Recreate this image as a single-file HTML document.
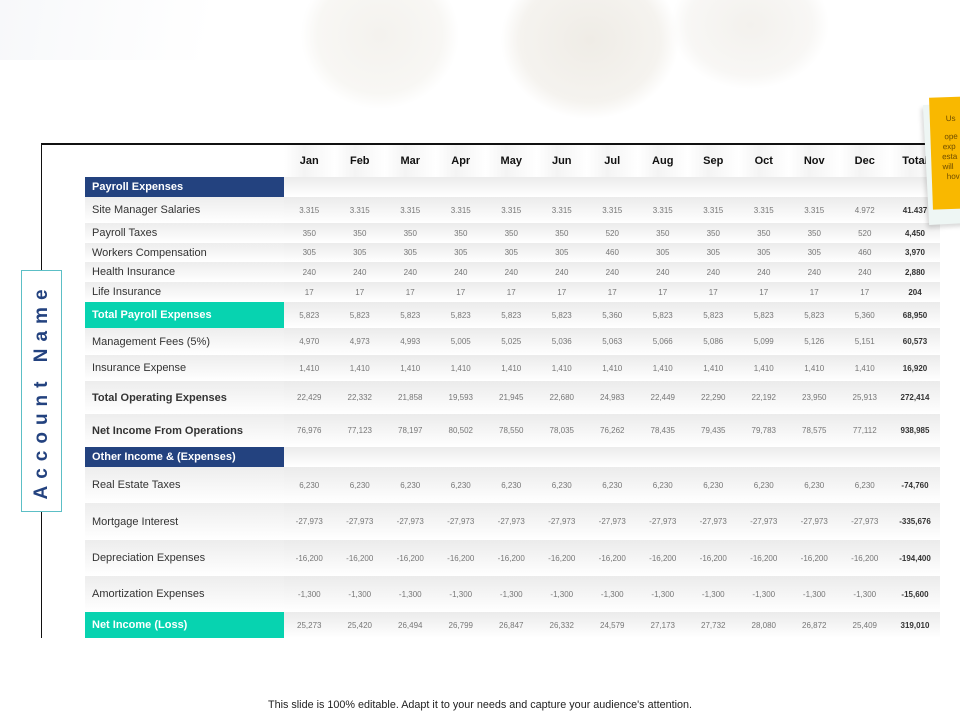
<!DOCTYPE html>
<html><head><meta charset="utf-8"><style>
body{margin:0;width:960px;height:720px;position:relative;overflow:hidden;background:#fff;font-family:"Liberation Sans",sans-serif}
.coin{position:absolute;border-radius:50%}
table{position:absolute;left:85px;top:144px;border-collapse:collapse;table-layout:fixed}
td{padding:0;text-align:center;font-size:8px;color:#777;background:linear-gradient(#ebebeb,#fff);vertical-align:middle}
td.l{text-align:left;padding-left:7px;font-size:11px;color:#333;background:linear-gradient(#ededed,#fff)}
td.t{font-weight:bold;color:#333}
tr.h td{background:linear-gradient(90deg,#fff 0,#f4f4f4 40%,#fff);font-size:11px;font-weight:bold;color:#111}
tr.h td.l{background:#fff}
td.blue{background:#23427f;color:#fff;font-weight:bold;font-size:11px}
td.teal{background:#07d3b0;color:#fff;font-weight:bold;font-size:11px}
td.b{font-weight:bold}
</style></head><body>
<div class="coin" style="left:300px;top:-40px;width:160px;height:150px;background:radial-gradient(#f4f2ee,#f8f7f4 55%,rgba(255,255,255,0) 70%)"></div>
<div class="coin" style="left:500px;top:-40px;width:180px;height:160px;background:radial-gradient(#efece6,#f5f3ef 55%,rgba(255,255,255,0) 70%)"></div>
<div class="coin" style="left:670px;top:-40px;width:160px;height:130px;background:radial-gradient(#f3f1ed,#f8f7f5 55%,rgba(255,255,255,0) 70%)"></div>
<div style="position:absolute;left:0;top:0;width:300px;height:60px;background:linear-gradient(100deg,#f7f8fa,#fff 70%)"></div>

<table>
<colgroup><col style="width:199px"><col span="12" style="width:50.5px"><col style="width:50px"></colgroup>
<tr class="h" style="height:33px"><td class="l"></td><td>Jan</td><td>Feb</td><td>Mar</td><td>Apr</td><td>May</td><td>Jun</td><td>Jul</td><td>Aug</td><td>Sep</td><td>Oct</td><td>Nov</td><td>Dec</td><td>Total</td></tr>
<tr style="height:20px"><td class="l blue">Payroll Expenses</td><td colspan="13"></td></tr>
<tr style="height:26px"><td class="l">Site Manager Salaries</td><td>3.315</td><td>3.315</td><td>3.315</td><td>3.315</td><td>3.315</td><td>3.315</td><td>3.315</td><td>3.315</td><td>3.315</td><td>3.315</td><td>3.315</td><td>4.972</td><td class="t">41.437</td></tr>
<tr style="height:20px"><td class="l">Payroll Taxes</td><td>350</td><td>350</td><td>350</td><td>350</td><td>350</td><td>350</td><td>520</td><td>350</td><td>350</td><td>350</td><td>350</td><td>520</td><td class="t">4,450</td></tr>
<tr style="height:19px"><td class="l">Workers Compensation</td><td>305</td><td>305</td><td>305</td><td>305</td><td>305</td><td>305</td><td>460</td><td>305</td><td>305</td><td>305</td><td>305</td><td>460</td><td class="t">3,970</td></tr>
<tr style="height:20px"><td class="l">Health Insurance</td><td>240</td><td>240</td><td>240</td><td>240</td><td>240</td><td>240</td><td>240</td><td>240</td><td>240</td><td>240</td><td>240</td><td>240</td><td class="t">2,880</td></tr>
<tr style="height:20px"><td class="l">Life Insurance</td><td>17</td><td>17</td><td>17</td><td>17</td><td>17</td><td>17</td><td>17</td><td>17</td><td>17</td><td>17</td><td>17</td><td>17</td><td class="t">204</td></tr>
<tr style="height:26px"><td class="l teal">Total Payroll Expenses</td><td>5,823</td><td>5,823</td><td>5,823</td><td>5,823</td><td>5,823</td><td>5,823</td><td>5,360</td><td>5,823</td><td>5,823</td><td>5,823</td><td>5,823</td><td>5,360</td><td class="t">68,950</td></tr>
<tr style="height:27px"><td class="l">Management Fees (5%)</td><td>4,970</td><td>4,973</td><td>4,993</td><td>5,005</td><td>5,025</td><td>5,036</td><td>5,063</td><td>5,066</td><td>5,086</td><td>5,099</td><td>5,126</td><td>5,151</td><td class="t">60,573</td></tr>
<tr style="height:26px"><td class="l">Insurance Expense</td><td>1,410</td><td>1,410</td><td>1,410</td><td>1,410</td><td>1,410</td><td>1,410</td><td>1,410</td><td>1,410</td><td>1,410</td><td>1,410</td><td>1,410</td><td>1,410</td><td class="t">16,920</td></tr>
<tr style="height:33px"><td class="l b">Total Operating Expenses</td><td>22,429</td><td>22,332</td><td>21,858</td><td>19,593</td><td>21,945</td><td>22,680</td><td>24,983</td><td>22,449</td><td>22,290</td><td>22,192</td><td>23,950</td><td>25,913</td><td class="t">272,414</td></tr>
<tr style="height:33px"><td class="l b">Net Income From Operations</td><td>76,976</td><td>77,123</td><td>78,197</td><td>80,502</td><td>78,550</td><td>78,035</td><td>76,262</td><td>78,435</td><td>79,435</td><td>79,783</td><td>78,575</td><td>77,112</td><td class="t">938,985</td></tr>
<tr style="height:20px"><td class="l blue">Other Income &amp; (Expenses)</td><td colspan="13"></td></tr>
<tr style="height:36px"><td class="l">Real Estate Taxes</td><td>6,230</td><td>6,230</td><td>6,230</td><td>6,230</td><td>6,230</td><td>6,230</td><td>6,230</td><td>6,230</td><td>6,230</td><td>6,230</td><td>6,230</td><td>6,230</td><td class="t">-74,760</td></tr>
<tr style="height:37px"><td class="l">Mortgage Interest</td><td>-27,973</td><td>-27,973</td><td>-27,973</td><td>-27,973</td><td>-27,973</td><td>-27,973</td><td>-27,973</td><td>-27,973</td><td>-27,973</td><td>-27,973</td><td>-27,973</td><td>-27,973</td><td class="t">-335,676</td></tr>
<tr style="height:36px"><td class="l">Depreciation Expenses</td><td>-16,200</td><td>-16,200</td><td>-16,200</td><td>-16,200</td><td>-16,200</td><td>-16,200</td><td>-16,200</td><td>-16,200</td><td>-16,200</td><td>-16,200</td><td>-16,200</td><td>-16,200</td><td class="t">-194,400</td></tr>
<tr style="height:36px"><td class="l">Amortization Expenses</td><td>-1,300</td><td>-1,300</td><td>-1,300</td><td>-1,300</td><td>-1,300</td><td>-1,300</td><td>-1,300</td><td>-1,300</td><td>-1,300</td><td>-1,300</td><td>-1,300</td><td>-1,300</td><td class="t">-15,600</td></tr>
<tr style="height:26px"><td class="l teal">Net Income (Loss)</td><td>25,273</td><td>25,420</td><td>26,494</td><td>26,799</td><td>26,847</td><td>26,332</td><td>24,579</td><td>27,173</td><td>27,732</td><td>28,080</td><td>26,872</td><td>25,409</td><td class="t">319,010</td></tr>
</table>

<div style="position:absolute;left:41px;top:143px;width:884px;height:2px;background:#111"></div>
<div style="position:absolute;left:41px;top:144px;width:1.2px;height:494px;background:#111"></div>
<div style="position:absolute;left:21px;top:270px;width:39px;height:240px;border:1.5px solid #5cbfc6;background:#fff"></div>
<div style="position:absolute;left:42px;top:391px;width:0;height:0"><div style="position:absolute;transform:translate(-50%,-50%) rotate(-90deg);white-space:nowrap;font-size:19px;font-weight:bold;color:#23427f;letter-spacing:7px">Account Name</div></div>

<div style="position:absolute;left:926px;top:104px;width:40px;height:120px;background:#eef6f4;transform:rotate(-3deg);box-shadow:-2px 3px 4px rgba(0,0,0,.15)"></div>
<div style="position:absolute;left:931px;top:97px;width:40px;height:112px;background:#f9b800;transform:rotate(-2deg);font-size:8px;color:#6b4a00;line-height:10px;padding-top:17px;box-sizing:border-box">
<div style="padding-left:16px">Us</div><div style="height:8px"></div>
<div style="padding-left:14px">ope</div><div style="padding-left:12px">exp</div><div style="padding-left:11px">esta</div><div style="padding-left:11px">will</div><div style="padding-left:15px">hov</div></div>

<div style="position:absolute;left:0;width:960px;top:699px;text-align:center;font-size:10.8px;color:#222">This slide is 100% editable. Adapt it to your needs and capture your audience's attention.</div>
</body></html>
